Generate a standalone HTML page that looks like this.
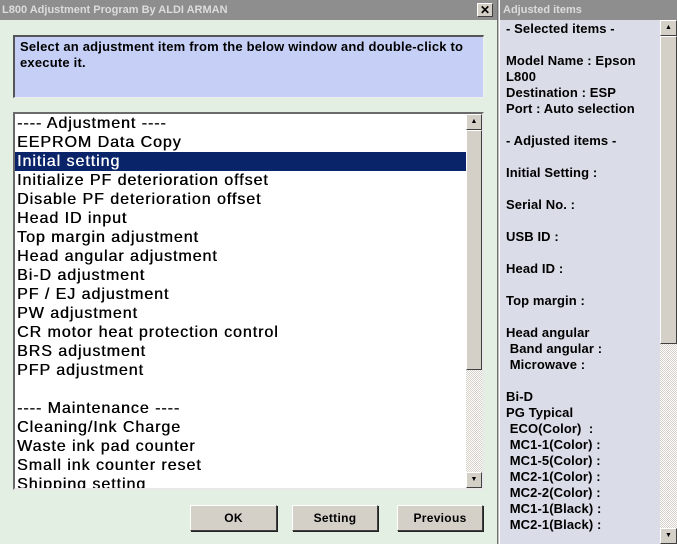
<!DOCTYPE html>
<html><head><meta charset="utf-8"><style>
*{margin:0;padding:0;box-sizing:border-box}
body{width:677px;height:544px;overflow:hidden;background:#e2efe2;font-family:"Liberation Sans",Arial,sans-serif;position:relative}
.abs{position:absolute}
.title{left:0;top:0;width:497px;height:20px;background:#8e8e8e;color:#dcdcdc;font-weight:bold;font-size:11px;line-height:20px;padding-left:2px}
.x{left:477px;top:3px;width:16px;height:14px;background:#d4d0c8;border:1px solid;border-color:#fff #404040 #404040 #fff;font-size:12px;line-height:12px;text-align:center;font-weight:bold;color:#000}
.info{left:13px;top:35px;width:471px;height:63px;background:#c6d0f6;border:1px solid;border-color:#555 #eee #eee #555;border-width:2px 1px 1px 2px;font-weight:bold;font-size:13px;letter-spacing:0.2px;line-height:16px;padding:2px 4px 2px 5px;color:#000;white-space:nowrap}
.list{left:13px;top:112px;width:471px;height:378px;background:#fff;border:2px solid;border-color:#6a6a6a #e8e8e8 #e8e8e8 #6a6a6a;overflow:hidden}
.list div{height:19px;line-height:19px;font-size:16px;letter-spacing:0.95px;text-shadow:0.4px 0 0 currentColor;padding-left:2px;color:#000;white-space:nowrap;width:451px}
.list .sel{background:#0a246a;color:#fff}
.track{background-color:#d4d0c8;background-image:repeating-conic-gradient(#fff 0 25%,#d4d0c8 0 50%);background-size:2px 2px}
.sbtn{width:16px;height:16px;background:#d4d0c8;border:1px solid;border-color:#fff #404040 #404040 #fff;font-size:7px;line-height:14px;text-align:center;color:#000}
.thumb{background:#d4d0c8;border:1px solid;border-color:#fff #404040 #404040 #fff}
.btn{top:505px;height:26px;background:#d4d0c8;border:1px solid;border-color:#fff #404040 #404040 #fff;box-shadow:1px 1px 0 #222;font-weight:bold;font-size:12px;letter-spacing:0.3px;line-height:24px;text-align:center;color:#000}
.sep{left:497px;top:0;width:3px;height:544px;background:#bfbfbf;border-left:1px solid #707070;border-right:1px solid #fff}
.rtitle{left:500px;top:0;width:177px;height:20px;background:#8e8e8e;color:#dcdcdc;font-weight:bold;font-size:11px;line-height:20px;padding-left:3px}
.rp{left:500px;top:20px;width:160px;height:524px;background:#dadde8;padding:1px 0 0 6px;font-weight:bold;font-size:13px;line-height:16px;color:#000;letter-spacing:0.1px;white-space:pre;overflow:hidden}
</style></head><body>
<div class="abs title">L800 Adjustment Program By ALDI ARMAN</div>
<div class="abs x">✕</div>
<div class="abs info">Select an adjustment item from the below window and double-click to<br>execute it.</div>
<div class="abs list">
<div>---- Adjustment ----</div>
<div>EEPROM Data Copy</div>
<div class="sel">Initial setting</div>
<div>Initialize PF deterioration offset</div>
<div>Disable PF deterioration offset</div>
<div>Head ID input</div>
<div>Top margin adjustment</div>
<div>Head angular adjustment</div>
<div>Bi-D adjustment</div>
<div>PF / EJ adjustment</div>
<div>PW adjustment</div>
<div>CR motor heat protection control</div>
<div>BRS adjustment</div>
<div>PFP adjustment</div>
<div></div>
<div>---- Maintenance ----</div>
<div>Cleaning/Ink Charge</div>
<div>Waste ink pad counter</div>
<div>Small ink counter reset</div>
<div>Shipping setting</div>
</div>
<div class="abs track" style="left:466px;top:114px;width:16px;height:374px"></div>
<div class="abs sbtn" style="left:466px;top:114px">▲</div>
<div class="abs thumb" style="left:466px;top:130px;width:16px;height:240px"></div>
<div class="abs sbtn" style="left:466px;top:472px">▼</div>
<div class="abs btn" style="left:190px;width:87px">OK</div>
<div class="abs btn" style="left:292px;width:86px">Setting</div>
<div class="abs btn" style="left:397px;width:86px">Previous</div>
<div class="abs sep"></div>
<div class="abs rtitle">Adjusted items</div>
<div class="abs rp">- Selected items -

Model Name : Epson
L800
Destination : ESP
Port : Auto selection

- Adjusted items -

Initial Setting :

Serial No. :

USB ID :

Head ID :

Top margin :

Head angular
 Band angular :
 Microwave :

Bi-D
PG Typical
 ECO(Color)  :
 MC1-1(Color) :
 MC1-5(Color) :
 MC2-1(Color) :
 MC2-2(Color) :
 MC1-1(Black) :
 MC2-1(Black) :</div>
<div class="abs track" style="left:660px;top:20px;width:17px;height:524px"></div>
<div class="abs sbtn" style="left:660px;top:20px;width:17px">▲</div>
<div class="abs thumb" style="left:660px;top:36px;width:17px;height:308px"></div>
<div class="abs sbtn" style="left:660px;top:528px;width:17px">▼</div>
</body></html>
